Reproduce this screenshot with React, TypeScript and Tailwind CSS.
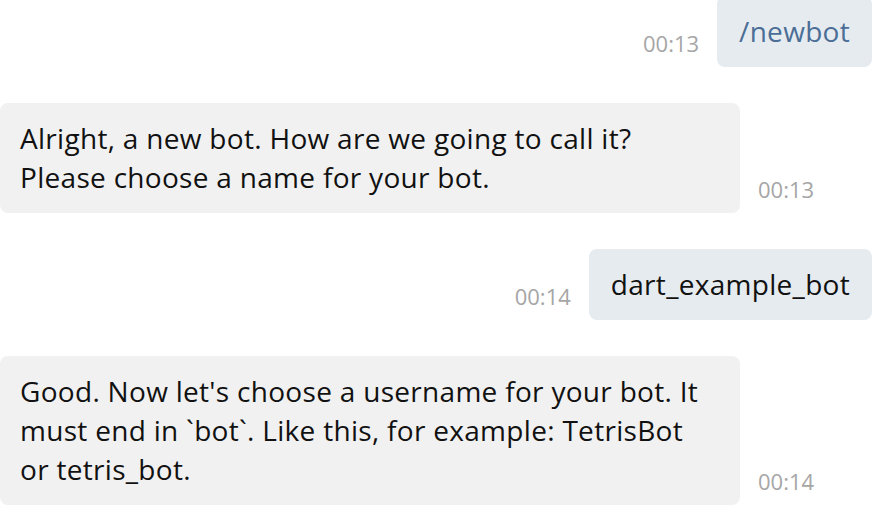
const incoming = 'w-[740px] shrink-0 whitespace-pre-line rounded-[8px] bg-[#f1f1f1] py-4 pl-5 pr-[30px] text-[28px] leading-[39px] tracking-[0.3px] text-[#111111]';
const outgoing = 'shrink-0 rounded-[8px] bg-[#e6ebf0] px-[22px] py-4 text-[28px] leading-[39px] tracking-[0.3px]';
const time = 'mb-[13px] text-[22px] leading-none text-[#a6a6a6]';

function OutRow({ text, at, command }: { text: string; at: string; command?: boolean }) {
  return (
    <div className="flex items-end justify-end gap-[18px] pr-2">
      <span className={time}>{at}</span>
      <div className={outgoing}>
        <span className={command ? 'text-[#4b6e96]' : 'text-[#111111]'}>{text}</span>
      </div>
    </div>
  );
}

function InRow({ lines, at }: { lines: string; at: string }) {
  return (
    <div className="flex items-end gap-[18px]">
      <div className={incoming}>{lines}</div>
      <span className={time}>{at}</span>
    </div>
  );
}

export default function App() {
  return (
    <div className="h-[516px] w-[880px] overflow-hidden bg-white font-['Open_Sans',sans-serif]">
      <div className="-mt-1 flex flex-col gap-[36px]">
        <OutRow text="/newbot" at="00:13" command />
        <InRow
          lines={'Alright, a new bot. How are we going to call it?\nPlease choose a name for your bot.'}
          at="00:13"
        />
        <OutRow text="dart_example_bot" at="00:14" />
        <InRow
          lines="Good. Now let's choose a username for your bot. It must end in `bot`. Like this, for example: TetrisBot or tetris_bot."
          at="00:14"
        />
      </div>
    </div>
  );
}
